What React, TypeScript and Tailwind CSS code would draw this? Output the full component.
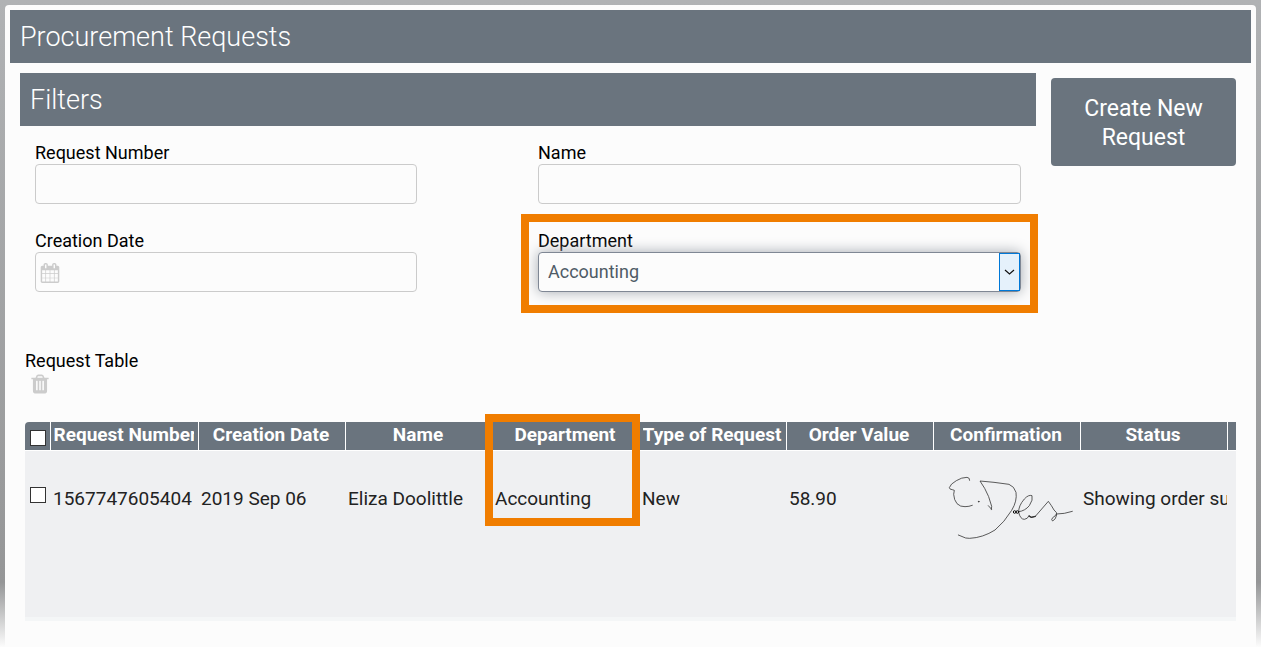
import { useState } from "react";

const columns = [
  "Request Number",
  "Creation Date",
  "Name",
  "Department",
  "Type of Request",
  "Order Value",
  "Confirmation",
  "Status",
];

const departments = ["Accounting", "Human Resources", "IT", "Marketing", "Sales"];

const inputClass =
  "block h-10 w-full rounded-sm border border-[#cbcbcb] bg-[#fcfcfc] px-2 text-lg text-[#4f5b66] outline-none";

const checkboxClass =
  "block size-4 appearance-none border border-[#333333] bg-white checked:bg-[#6a747e]";

const CalendarIcon = () => (
  <svg viewBox="0 0 1792 1792" className="mt-px size-5 fill-[#cccccc]" aria-hidden="true">
    <path d="M192 1664h288v-288h-288v288zm352 0h320v-288h-320v288zm-352-352h288v-320h-288v320zm352 0h320v-320h-320v320zm-352-384h288v-288h-288v288zm736 736h320v-288h-320v288zm-384-736h320v-288h-320v288zm768 736h288v-288h-288v288zm-384-352h320v-320h-320v320zm-352-864v-288q0-13-9.5-22.5t-22.5-9.5h-64q-13 0-22.5 9.5t-9.5 22.5v288q0 13 9.5 22.5t22.5 9.5h64q13 0 22.5-9.5t9.5-22.5zm736 864h288v-320h-288v320zm-384-384h320v-288h-320v288zm384 0h288v-288h-288v288zm32-480v-288q0-13-9.5-22.5t-22.5-9.5h-64q-13 0-22.5 9.5t-9.5 22.5v288q0 13 9.5 22.5t22.5 9.5h64q13 0 22.5-9.5t9.5-22.5zm384-64v1280q0 52-38 90t-90 38h-1408q-52 0-90-38t-38-90v-1280q0-52 38-90t90-38h128v-96q0-66 47-113t113-47h64q66 0 113 47t47 113v96h384v-96q0-66 47-113t113-47h64q66 0 113 47t47 113v96h128q52 0 90 38t38 90z" />
  </svg>
);

const TrashIcon = () => (
  <svg viewBox="0 0 1792 1792" className="size-[22px] fill-[#cccccc]" aria-hidden="true">
    <path d="M704 1376v-704q0-14-9-23t-23-9h-64q-14 0-23 9t-9 23v704q0 14 9 23t23 9h64q14 0 23-9t9-23zm256 0v-704q0-14-9-23t-23-9h-64q-14 0-23 9t-9 23v704q0 14 9 23t23 9h64q14 0 23-9t9-23zm256 0v-704q0-14-9-23t-23-9h-64q-14 0-23 9t-9 23v704q0 14 9 23t23 9h64q14 0 23-9t9-23zm-544-992h448l-48-117q-7-9-17-11h-317q-10 2-17 11zm928 32v64q0 14-9 23t-23 9h-96v948q0 83-47 143.5t-113 60.5h-832q-66 0-113-58.5t-47-141.5v-952h-96q-14 0-23-9t-9-23v-64q0-14 9-23t23-9h309l70-167q15-37 54-63t79-26h320q40 0 79 26t54 63l70 167h309q14 0 23 9t9 23z" />
  </svg>
);

const Signature = () => (
  <svg
    viewBox="0 0 435 255"
    className="h-[85px] w-[145px] max-w-none"
    fill="none"
    stroke="#333333"
    strokeWidth="2.4"
    strokeLinecap="round"
    strokeLinejoin="round"
    role="img"
    aria-label="Signature"
  >
    <path d="M92 46Q93 38 84 37Q68 37 52 47Q34 57 31 68Q32 74 40 74L46 76L44 88Q45 105 54 116Q64 126 78 125Q90 125 100 121" />
    <path d="M157 132L148 122M157 134L158 124Q150 92 137 70L123 48L165 52L210 58Q226 64 231 82Q235 108 218 136Q196 172 168 195Q132 218 92 220L80 219L58 210" />
    <path d="M239 140Q258 138 271 122Q283 104 279 92Q269 88 256 102Q238 123 239 142Q244 163 256 163Q266 162 270 152L277 157L289 154L328 109Q338 122 345 135Q355 142 353 150Q350 164 341 168Q335 165 341 158Q350 153 352 147L376 145L400 139" />
    <path d="M270 153L277 157L289 154" strokeWidth="4" />
    <circle cx="227" cy="141" r="4" stroke="#111111" strokeWidth="3" />
    <circle cx="235" cy="141" r="4" stroke="#111111" strokeWidth="3" />
    <circle cx="119" cy="110" r="1" strokeWidth="3" />
  </svg>
);

const Filters = () => {
  const [department, setDepartment] = useState("Accounting");

  return (
    <section className="min-w-0 flex-1">
      <h2 className="bg-[#6a747e] px-[10px] pt-[7px] pb-[5px] text-[27px] leading-[41px] font-light text-white">
        Filters
      </h2>
      <div className="grid grid-cols-[382fr_483fr] gap-x-[121px] gap-y-[26px] px-[15px] pt-4 text-lg leading-[22px]">
        <div>
          <label htmlFor="request-number" className="block">
            Request Number
          </label>
          <input id="request-number" type="text" className={inputClass} />
        </div>
        <div>
          <label htmlFor="name" className="block">
            Name
          </label>
          <input id="name" type="text" className={inputClass} />
        </div>
        <div>
          <label htmlFor="creation-date" className="block">
            Creation Date
          </label>
          <div className="flex h-10 items-center rounded-sm border border-[#cbcbcb] pl-1">
            <CalendarIcon />
            <input id="creation-date" type="text" className="min-w-0 flex-1 px-2 outline-none" />
          </div>
        </div>
        <div className="relative">
          <label htmlFor="department" className="block">
            Department
          </label>
          <div className="relative">
            <select
              id="department"
              value={department}
              onChange={(e) => setDepartment(e.target.value)}
              className="block h-10 w-full appearance-none rounded-sm border border-[#7f8794] bg-[#fcfcfc] pr-6 pl-[9px] text-[#4f5b66] shadow-[0_0_14px_#a4a9b0] outline-none"
            >
              {departments.map((d) => (
                <option key={d}>{d}</option>
              ))}
            </select>
            <span className="pointer-events-none absolute inset-y-px right-px flex w-[21px] items-center justify-center border border-[#0078d7] bg-[#e5f1fb]">
              <svg viewBox="0 0 11 6" className="h-[6px] w-[11px]" fill="none" stroke="#111111" strokeWidth="1.2">
                <path d="M1 1l4.5 4 4.5-4" />
              </svg>
            </span>
          </div>
          <div className="pointer-events-none absolute -inset-x-[17px] -top-4 -bottom-[21px] border-8 border-[#f07d00]" />
        </div>
      </div>
    </section>
  );
};

const RequestTable = () => {
  return (
    <section className="px-[15px] pt-[58px]">
      <h2 className="text-lg leading-[22px]">Request Table</h2>
      <button type="button" aria-label="Delete selected requests" className="mt-px ml-1 block">
        <TrashIcon />
      </button>
      <div className="mt-[27px] border-b-4 border-[#f4f6f7]">
        <table className="w-full table-fixed border-collapse text-[19px] leading-[28px]">
          <colgroup>
            <col className="w-[25px]" />
            <col className="w-[148px]" />
            <col span={7} />
            <col className="w-[9px]" />
          </colgroup>
          <thead>
            <tr className="h-7 leading-[26px] text-white">
              <th className="rounded-tl-sm border-r border-white bg-[#6a747e] pt-2 pb-1 pl-[5px]">
                <input type="checkbox" aria-label="Select all requests" className={checkboxClass} />
              </th>
              {columns.map((column) => (
                <th
                  key={column}
                  className="relative border-r border-white bg-[#6a747e] pr-1 pb-[2px] pl-[3px] font-bold"
                >
                  <div className="overflow-hidden whitespace-nowrap">{column}</div>
                  {column === "Department" && (
                    <div className="pointer-events-none absolute -top-2 -right-px -left-2 z-10 h-28 border-8 border-[#f07d00]" />
                  )}
                </th>
              ))}
              <th className="bg-[#6a747e]" />
            </tr>
          </thead>
          <tbody>
            <tr className="h-[166px] border-t border-white bg-[#eff0f2] align-top text-[#222222]">
              <td className="pt-9 pl-[5px]">
                <input type="checkbox" aria-label="Select request 1567747605404" className={checkboxClass} />
              </td>
              <td className="pt-[34px] pl-[3px]">1567747605404</td>
              <td className="pt-[34px] pl-[3px]">2019 Sep 06</td>
              <td className="pt-[34px] pl-[3px]">Eliza Doolittle</td>
              <td className="pt-[34px] pl-[3px]">Accounting</td>
              <td className="pt-[34px] pl-[3px]">New</td>
              <td className="pt-[34px] pl-[3px]">58.90</td>
              <td className="pt-[14px] pl-[6px]">
                <Signature />
              </td>
              <td className="overflow-hidden pt-[34px] pl-[3px] whitespace-nowrap">
                Showing order su
              </td>
              <td />
            </tr>
          </tbody>
        </table>
      </div>
    </section>
  );
};

const App = () => {
  return (
    <div className="flex min-h-screen flex-col bg-linear-to-b from-[#b0b2b4] via-[#959697] via-90% to-[#fcfcfc] px-[5px] pt-[5px] font-['Roboto','Liberation_Sans',sans-serif] text-black">
      <main className="flex-1 rounded-t-sm bg-[#fcfcfc] pb-5">
        <h1 className="mx-[5px] mt-[5px] bg-[#6a747e] px-[10px] pt-[7px] pb-[5px] text-[27px] leading-[41px] font-light text-white">
          Procurement Requests
        </h1>
        <div className="mx-[5px]">
          <div className="flex items-start gap-[15px] px-[10px] pt-[10px]">
            <Filters />
            <button
              type="button"
              className="mt-[5px] mr-[5px] w-[185px] rounded-sm bg-[#6a747e] px-5 pt-4 pb-[14px] text-[23px] leading-[29px] text-white"
            >
              Create New Request
            </button>
          </div>
          <RequestTable />
        </div>
      </main>
    </div>
  );
};

export default App;
